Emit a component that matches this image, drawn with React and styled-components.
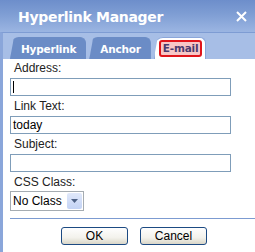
import React from "react";
import styled, { createGlobalStyle } from "styled-components";

const Global = createGlobalStyle`
  html, body { margin: 0; padding: 0; background: #fff; }
  body { font-family: "Liberation Sans", Arial, sans-serif; }
`;

const Window = styled.div`
  width: 255px;
  height: 252px;
  display: flex;
  flex-direction: column;
  background: #fff;
  overflow: hidden;
`;

const TitleBar = styled.div`
  height: 32px;
  flex: none;
  box-sizing: border-box;
  display: flex;
  align-items: center;
  justify-content: space-between;
  padding: 0 8px 0 18px;
  background: linear-gradient(#6d8ecb 0%, #7f9ed4 45%, #9bb5e2 100%);
  color: #fff;
`;

const Title = styled.div`
  font-family: "DejaVu Sans", Verdana, sans-serif;
  font-weight: bold;
  font-size: 14px;
  letter-spacing: -0.3px;
  padding-top: 1px;
`;

const Close = styled.svg`
  width: 11px;
  height: 11px;
  margin-top: 1px;
`;

const TabStrip = styled.div`
  height: 26px;
  flex: none;
  display: flex;
  align-items: flex-end;
  gap: 3px;
  padding-left: 7px;
  background: #a7bee6;
  border-top: 1px solid #7e9cd3;
  border-left: 3px solid #8aa6da;
`;

const Tab = styled.div`
  height: 22px;
  box-sizing: border-box;
  display: flex;
  align-items: center;
  justify-content: center;
  padding: 0 ${(p) => p.$pad}px 0 ${(p) => p.$pad + 1}px;
  font-family: "DejaVu Sans", Verdana, sans-serif;
  font-weight: bold;
  font-size: 10.5px;
  letter-spacing: -0.2px;
  color: ${(p) => (p.$active ? "#4b3c6e" : "#fff")};
  background: ${(p) => (p.$active ? "#fff" : "#6b8cc6")};
  border: 1px solid ${(p) => (p.$active ? "#8aa6da" : "#6b8cc6")};
  border-bottom: none;
  border-radius: 9px 6px 0 0;
  clip-path: polygon(0 100%, 4px 0, 100% 0, 100% 100%);
`;

const Mark = styled.span`
  display: inline-block;
  padding: 1px 2px;
  background: #f7c7c7;
  border: 2px solid #e0151b;
  border-radius: 3px;
  line-height: 11px;
`;

const Body = styled.div`
  flex: 1;
  display: flex;
  flex-direction: column;
  padding: 1px 0 0 7px;
  border-left: 3px solid #8aa6da;
`;

const Label = styled.div`
  font-size: 12px;
  color: #222;
  padding-left: 4px;
  height: 17px;
  line-height: 17px;
  margin-top: ${(p) => p.$mt || 0}px;
`;

const Input = styled.div`
  width: 221px;
  height: 18px;
  flex: none;
  box-sizing: border-box;
  border: 1px solid #7f9db9;
  margin-top: 1px;
  font-size: 12px;
  line-height: 16px;
  padding-left: 2px;
  color: #000;
  display: flex;
  align-items: center;
`;

const Caret = styled.span`
  width: 1px;
  height: 12px;
  background: #000;
`;

const Select = styled.div`
  width: 74px;
  height: 20px;
  flex: none;
  box-sizing: border-box;
  border: 1px solid #a5acb2;
  display: flex;
  align-items: stretch;
  font-size: 12px;
`;

const SelectText = styled.div`
  flex: 1;
  padding-left: 2px;
  line-height: 18px;
  color: #000;
`;

const Arrow = styled.div`
  width: 15px;
  margin: 1px;
  background: linear-gradient(#e0e8fa, #c3d3f5);
  border-radius: 2px;
  display: flex;
  align-items: center;
  justify-content: center;
`;

const Separator = styled.div`
  height: 1px;
  flex: none;
  background: #7c9bd1;
  margin-top: 7px;
`;

const Buttons = styled.div`
  display: flex;
  gap: 12px;
  padding-left: 51px;
  margin-top: 8px;
`;

const Button = styled.div`
  width: 67px;
  height: 18px;
  box-sizing: border-box;
  border: 1px solid #1c4a82;
  border-radius: 3px;
  background: linear-gradient(#fefefe, #f3f2ec 60%, #d9d6c8);
  font-size: 12px;
  display: flex;
  align-items: center;
  justify-content: center;
  color: #000;
`;

export default function App() {
  return (
    <>
      <Global />
      <Window>
        <TitleBar>
          <Title>Hyperlink Manager</Title>
          <Close viewBox="0 0 11 11">
            <path d="M1 1 L10 10 M10 1 L1 10" stroke="#fff" strokeWidth="2" />
          </Close>
        </TitleBar>
        <TabStrip>
          <Tab $pad={9}>Hyperlink</Tab>
          <Tab $pad={9}>Anchor</Tab>
          <Tab $active $pad={3}>
            <Mark>E-mail</Mark>
          </Tab>
        </TabStrip>
        <Body>
          <Label>Address:</Label>
          <Input>
            <Caret />
          </Input>
          <Label $mt={2}>Link Text:</Label>
          <Input>today</Input>
          <Label $mt={2}>Subject:</Label>
          <Input />
          <Label $mt={2}>CSS Class:</Label>
          <Select>
            <SelectText>No Class</SelectText>
            <Arrow>
              <svg width="7" height="4" viewBox="0 0 7 4">
                <path d="M0 0 H7 L3.5 4 Z" fill="#4d6185" />
              </svg>
            </Arrow>
          </Select>
          <Separator />
          <Buttons>
            <Button>OK</Button>
            <Button>Cancel</Button>
          </Buttons>
        </Body>
      </Window>
    </>
  );
}
